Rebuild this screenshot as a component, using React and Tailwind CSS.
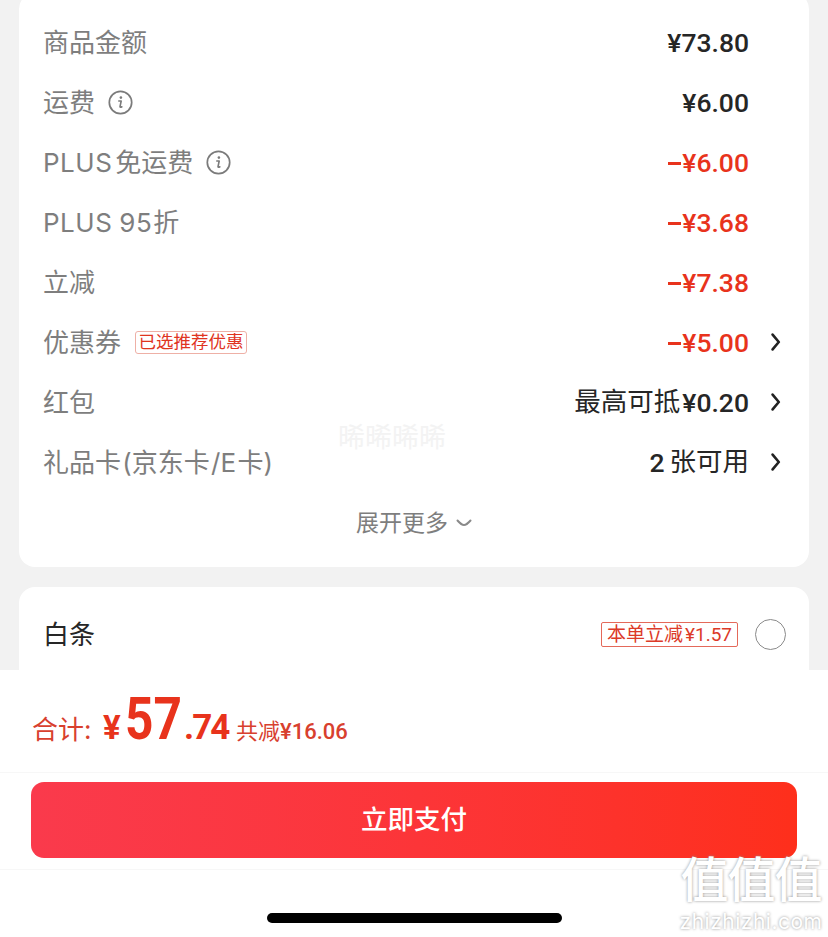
const FONT = { fontFamily: '"Inter", "Noto Sans CJK SC", sans-serif' }
const NUM = { fontFamily: '"Roboto", "Noto Sans CJK SC", sans-serif' }

function InfoIcon() {
  return (
    <svg width="25" height="25" viewBox="0 0 25 25" fill="none" stroke="#7b7b7b" className="shrink-0">
      <circle cx="12.5" cy="12.5" r="11.2" strokeWidth="1.7" />
      <circle cx="12.9" cy="7.6" r="1.3" fill="#7b7b7b" stroke="none" />
      <path d="M10.8 11h2.400l-1.200 5.600c-.1.800.6 1 1.900.2" strokeWidth="1.6" strokeLinecap="round" strokeLinejoin="round" />
    </svg>
  )
}

function Chevron() {
  return (
    <svg width="10" height="18" viewBox="0 0 10 18" fill="none" stroke="#222" strokeWidth="2.6" strokeLinecap="round" strokeLinejoin="round" className="mb-[2px]">
      <path d="M1.600 1.600 7.800 9l-6.200 7.400" />
    </svg>
  )
}

function Row({ label, info, tag, value, red, arrow }) {
  return (
    <div className="flex h-[60px] items-center pl-6 pr-[28px]">
      <span className="flex items-center text-[26px] leading-none text-[#7e7e7e] whitespace-nowrap">{label}</span>
      {info && <span className="mb-[1px] ml-[13px]"><InfoIcon /></span>}
      {tag && (
        <span className="mb-[2px] ml-[14px] flex h-[23px] w-[112px] items-center justify-center rounded-[3px] border border-[#eeb0a6] text-[17.500px] leading-none text-[#e0341f] whitespace-nowrap">
          {tag}
        </span>
      )}
      <span
        className={`ml-auto flex items-center text-[26.500px] font-medium whitespace-nowrap ${red ? 'text-[#e8331c]' : 'text-[#262626]'}`}
        style={NUM}
      >
        {value}
      </span>
      <span className="flex w-[32px] justify-end">{arrow && <Chevron />}</span>
    </div>
  )
}

function Minus({ amount }) {
  return (
    <>
      <span className="mr-[1px] inline-block h-[3px] w-[13px] bg-[#e8331c]" />
      {amount}
    </>
  )
}

export default function App() {
  return (
    <div className="relative flex h-[937px] w-[828px] flex-col overflow-hidden bg-[#f2f2f2]" style={FONT}>
      <div className="mx-[19px] -mt-[7px] flex h-[574px] flex-col rounded-[16px] bg-white pt-5">
        <Row label="商品金额" value="¥73.80" />
        <Row label="运费" info value="¥6.00" />
        <Row
          label={<><span className="mr-[3px] tracking-[0.5px]">PLUS</span>免运费</>}
          info
          value={<Minus amount="¥6.00" />}
          red
        />
        <Row
          label={<><span className="tracking-[0.5px]">PLUS</span><span className="ml-[7px] mr-[1px] tracking-[0.5px]">95</span>折</>}
          value={<Minus amount="¥3.68" />}
          red
        />
        <Row label="立减" value={<Minus amount="¥7.38" />} red />
        <Row label="优惠券" tag="已选推荐优惠" value={<Minus amount="¥5.00" />} red arrow />
        <Row
          label="红包"
          value={<><span className="mb-[2px] mr-[2px] font-normal" style={FONT}>最高可抵</span>¥0.20</>}
          arrow
        />
        <Row
          label={<span className="[word-spacing:-6px]">礼品卡 (京东卡 /E 卡)</span>}
          value={<>2<span className="mb-[2px] ml-[5px] font-normal" style={FONT}>张可用</span></>}
          arrow
        />
        <div className="flex h-[60px] items-center justify-center gap-2 text-[23px] text-[#7e7e7e]">
          <span>展开更多</span>
          <svg width="16" height="8" viewBox="0 0 16 8" fill="none" stroke="#8a8a8a" strokeWidth="2" strokeLinecap="round">
            <path d="M1.500 1.500C5 5.500 6.500 6 8 6s3-.5 6.500-4.500" />
          </svg>
        </div>
      </div>

      <div className="mx-[19px] mt-5 flex h-[83px] shrink-0 items-start rounded-t-[16px] bg-white pl-6 pr-[23px] pt-[30px]">
        <span className="text-[26px] leading-[36px] text-[#262626]">白条</span>
        <span className="ml-auto mt-[5px] flex h-[25px] w-[137px] items-center justify-center rounded-[2px] border border-[#e4695a] text-[19px] leading-none text-[#dc3a28] whitespace-nowrap">
          本单立减<span className="ml-[2px]" style={NUM}>¥1.57</span>
        </span>
        <span className="ml-[17px] mt-[2px] h-[31px] w-[31px] rounded-full border border-[#8a8a8a]" />
      </div>

      <div className="flex flex-1 flex-col bg-white">
        <div className="flex h-[103px] items-baseline border-b border-[#f7f7f7] pl-[32px] pt-[19px] text-[#e8331c]" style={NUM}>
          <span className="w-[71px] text-[26px] text-[#d8402e]" style={FONT}>合计:</span>
          <span className="w-[22px] text-[33px] font-bold">¥</span>
          <span className="inline-block w-[59px] origin-left scale-x-[.84] text-[59px] font-bold leading-none">57</span>
          <span className="w-[52px] text-[35px] font-bold leading-none tracking-[-2px]">.74</span>
          <span className="text-[22px] font-medium text-[#d8402e]"><span style={FONT} className="font-normal">共减</span>¥16.06</span>
        </div>
        <div className="flex h-[97px] items-start border-b border-[#f7f7f7] px-[31px] pt-[9px]">
          <button className="flex h-[76px] w-full items-center justify-center rounded-[13px] bg-gradient-to-r from-[#fa3a4c] to-[#fe2f1b] text-[26.500px] font-medium text-white">
            立即支付
          </button>
        </div>
        <div className="flex flex-1 justify-center pt-[43px]">
          <div className="h-[10px] w-[295px] rounded-full bg-black" />
        </div>
      </div>

      <span className="absolute left-[338px] top-[418px] text-[27px] text-[#f3f3f3] whitespace-nowrap">晞晞晞晞</span>
      <div className="absolute left-[678px] top-[850px] flex w-[146px] flex-col items-center text-white [text-shadow:0_0_3px_#8f8f8f]">
        <span className="text-[48px] font-medium leading-[60px] tracking-[-1px] whitespace-nowrap">值值值</span>
        <span className="text-[21px] leading-[24px] tracking-[0.5px]">zhizhizhi.com</span>
      </div>
    </div>
  )
}
